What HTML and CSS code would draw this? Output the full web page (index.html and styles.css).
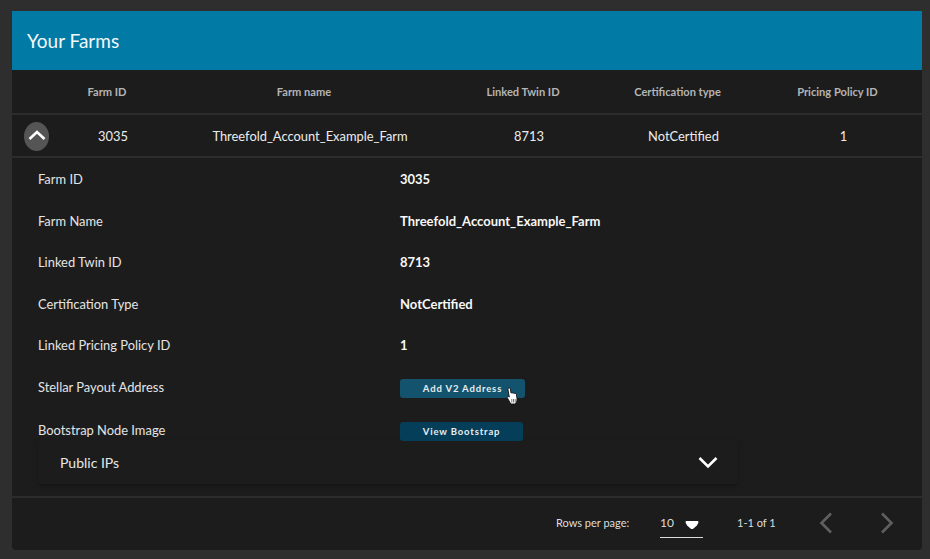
FILE: index.html
```html
<!DOCTYPE html>
<html lang="en">
<head>
  <meta charset="UTF-8">
  <meta name="viewport" content="width=device-width, initial-scale=1.0">
  <title>Your Farms</title>
  <link rel="stylesheet" href="styles.css">
</head>
<body>
  <div class="card">
    <div class="card-title">Your Farms</div>

    <!-- Table -->
    <div class="table-row table-head">
      <span></span>
      <span>Farm ID</span>
      <span>Farm name</span>
      <span>Linked Twin ID</span>
      <span>Certification type</span>
      <span>Pricing Policy ID</span>
    </div>
    <div class="table-row table-body">
      <span class="expand-cell">
        <span class="expand-btn">
          <svg width="24" height="24" viewBox="0 0 24 24"><path d="M4.5 15 12 8l7.500 7" fill="none" stroke="#fff" stroke-width="2.6"/></svg>
        </span>
      </span>
      <span>3035</span>
      <span>Threefold_Account_Example_Farm</span>
      <span>8713</span>
      <span>NotCertified</span>
      <span>1</span>
    </div>

    <!-- Expanded details -->
    <div class="details">
      <div class="detail-row"><span class="detail-label">Farm ID</span><span class="detail-value">3035</span></div>
      <div class="detail-row"><span class="detail-label">Farm Name</span><span class="detail-value">Threefold_Account_Example_Farm</span></div>
      <div class="detail-row"><span class="detail-label">Linked Twin ID</span><span class="detail-value">8713</span></div>
      <div class="detail-row"><span class="detail-label">Certification Type</span><span class="detail-value">NotCertified</span></div>
      <div class="detail-row"><span class="detail-label">Linked Pricing Policy ID</span><span class="detail-value">1</span></div>
      <div class="detail-row"><span class="detail-label">Stellar Payout Address</span><span class="detail-value"><button class="small-btn btn-hover">Add V2 Address</button></span></div>
      <div class="detail-row row-last"><span class="detail-label">Bootstrap Node Image</span><span class="detail-value"><button class="small-btn">View Bootstrap</button></span></div>
      <svg class="cursor" width="14" height="18" viewBox="0 0 14 18"><path d="M3.5 1.2c.8-.6 1.7-.2 1.9.7l.6 4.2c.5-.6 1.6-.5 1.9.2.5-.5 1.5-.4 1.8.3.6-.4 1.5-.1 1.7.7l.6 4.2c.3 2.200-.6 4.200-1.800 5.500H5.800L2.400 10.900c-.6-.8.2-1.800 1.200-1.300l.7.5-1.300-7.400c-.1-.6.1-1.100.5-1.500z" fill="#fff" stroke="#111" stroke-width=".9"/><path d="M6.800 12v3.500M8.500 12v3.500M10.200 12v3.500" stroke="#555" stroke-width=".8"/></svg>
    </div>

    <div class="panel">
      <span>Public IPs</span>
      <svg width="24" height="24" viewBox="0 0 24 24"><path d="M3.500 8 12 16.500 20.500 8" fill="none" stroke="#fff" stroke-width="2.600"/></svg>
    </div>

    <!-- Pagination -->
    <div class="pager">
      <span class="pager-label">Rows per page:</span>
      <span class="pager-select">
        <span>10</span>
        <svg class="pager-caret" width="16" height="10" viewBox="0 0 16 10"><path d="M1.500 2Q1.500 1 2.500 1h11q1 0 1 1Q14 5 9.500 8.500q-1.500 1-3 0Q2 5 1.500 2z" fill="#fff"/></svg>
      </span>
      <span class="pager-range">1-1 of 1</span>
      <span class="pager-nav">
        <svg width="24" height="24" viewBox="0 0 24 24"><path d="M16 2.500 6.500 12l9.500 9.500" fill="none" stroke="#5f5f5f" stroke-width="2.600"/></svg>
        <svg width="24" height="24" viewBox="0 0 24 24"><path d="M8 2.500 17.500 12 8 21.500" fill="none" stroke="#5f5f5f" stroke-width="2.600"/></svg>
      </span>
    </div>
  </div>
</body>
</html>
```

FILE: styles.css
```css
body {
  margin: 0;
  height: 559px;
  overflow: hidden;
  background-color: #2e2e2e;
  font-family: Lato, "Open Sans", sans-serif;
  color: #fff;
}

.card {
  margin: 11px 8px 0 12px;
  height: 539px;
  background-color: #1c1c1c;
  border-radius: 0 0 4px 4px;
  display: flex;
  flex-direction: column;
}

.card-title {
  height: 59px;
  flex: none;
  display: flex;
  align-items: center;
  padding: 0 0 0 15px;
  box-sizing: border-box;
  background-color: #017aa6;
  font-size: 19px;
  color: #f4f8fa;
}

.table-row {
  display: grid;
  grid-template-columns: 50px 102px 292px 146px 163px 157px;
  align-items: center;
  text-align: center;
  box-sizing: border-box;
  border-bottom: 2px solid #2c2c2c;
}

.table-head {
  height: 45px;
  flex: none;
  font-size: 11.1px;
  font-weight: 700;
  color: #b4b4b4;
}

.table-head span {
  padding-right: 12px;
}

.table-body {
  height: 43px;
  flex: none;
  font-size: 12.9px;
  color: #ececec;
}

.expand-cell {
  display: flex;
  padding-left: 12px;
}

.expand-btn {
  width: 25px;
  height: 29px;
  margin-top: 1px;
  border-radius: 50%;
  background-color: #555;
  display: flex;
  align-items: center;
  justify-content: center;
}

.details {
  position: relative;
  padding: 0.5px 0 0 26px;
}

.detail-row {
  display: flex;
  align-items: center;
  height: 41.5px;
  font-size: 12.9px;
}

.row-last {
  margin-top: 1.5px;
}

.detail-label {
  width: 362px;
  color: #e4e4e4;
}

.detail-value {
  font-size: 13px;
  font-weight: 700;
  color: #f7f7f7;
}

.small-btn {
  display: block;
  width: 123px;
  height: 19px;
  margin: 3px 0 0;
  padding: 0;
  border: none;
  border-radius: 3px;
  background-color: #043e59;
  color: #e8eef1;
  font-family: inherit;
  font-size: 9.5px;
  font-weight: 700;
  letter-spacing: 0.85px;
}

.btn-hover {
  width: 125px;
  background-color: #14536d;
}

.cursor {
  position: absolute;
  left: 493px;
  top: 229px;
}

.panel {
  height: 44px;
  flex: none;
  margin: -10.5px 184px 0 26px;
  padding: 0 18px 0 22px;
  display: flex;
  align-items: center;
  justify-content: space-between;
  font-size: 14px;
  color: #e8e8e8;
  border-radius: 0 0 4px 4px;
  box-shadow: 0 2px 4px rgba(0, 0, 0, 0.25);
}

.pager {
  flex: 1;
  margin-top: 11.5px;
  padding: 0 0 2px 544px;
  border-top: 2px solid #2c2c2c;
  display: flex;
  align-items: center;
  font-size: 11px;
  color: #dedede;
}

.pager-label {
  width: 104px;
}

.pager-select {
  width: 43px;
  height: 30px;
  display: flex;
  align-items: center;
  gap: 10px;
  box-sizing: border-box;
  border-bottom: 1px solid #dcdcdc;
  font-size: 12px;
}

.pager-caret {
  margin-top: 6px;
}

.pager-range {
  margin-left: 34px;
  width: 78px;
}

.pager-nav {
  display: flex;
  gap: 35px;
  margin-top: 1px;
}
```
